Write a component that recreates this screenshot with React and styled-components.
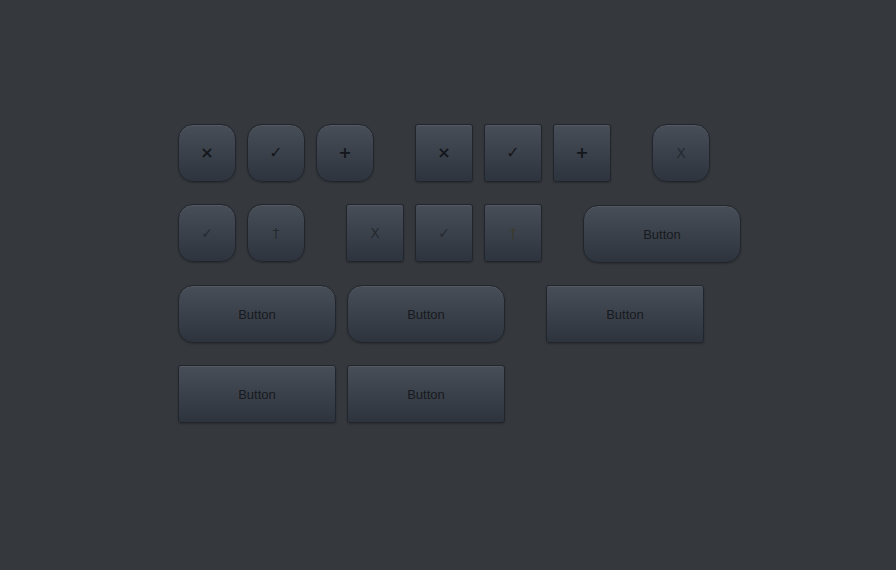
import styled, { createGlobalStyle } from "styled-components"

const GlobalStyle = createGlobalStyle`
	html, body {
		margin: 0;
		padding: 0;
		background: #35383d;
		font-family: "Liberation Sans", Arial, sans-serif;
	}
`

const Page = styled.div`
	width: 896px;
	height: 570px;
	box-sizing: border-box;
	padding: 124px 0 0 178px;
	display: flex;
	flex-direction: column;
	gap: 22px;
`

const Row = styled.div`
	display: flex;
	align-items: flex-start;
	gap: 41px;
`

const Group = styled.div`
	display: flex;
	gap: 11px;
`

const Btn = styled.button`
	box-sizing: border-box;
	width: ${(p) => (p.$wide ? "158px" : "58px")};
	height: 58px;
	margin-top: ${(p) => p.$shift || 0}px;
	padding: 0;
	display: flex;
	align-items: center;
	justify-content: center;
	border: 1px solid #22262c;
	border-radius: ${(p) => (p.$round ? "15px" : "3px")};
	background: linear-gradient(#484e57, #2e343d);
	box-shadow: inset 0 1px 0 rgba(255, 255, 255, 0.07), 0 1px 2px rgba(0, 0, 0, 0.25);
	color: #171a20;
	font-family: "Liberation Sans", Arial, sans-serif;
	font-size: 13px;
	cursor: pointer;
	outline: none;
`

const Glyph = styled.span`
	font-family: "DejaVu Sans", sans-serif;
	font-size: ${(p) => (p.$thin ? "14px" : "16px")};
	font-weight: ${(p) => (p.$thin ? 400 : 700)};
	color: ${(p) => p.$color || (p.$thin ? "#252a31" : "#14171c")};
	line-height: 1;
`

function App() {
	return (
		<>
			<GlobalStyle />
			<Page>
				<Row>
					<Group>
						<Btn $round><Glyph>×</Glyph></Btn>
						<Btn $round><Glyph>✓</Glyph></Btn>
						<Btn $round><Glyph>+</Glyph></Btn>
					</Group>
					<Group>
						<Btn><Glyph>×</Glyph></Btn>
						<Btn><Glyph>✓</Glyph></Btn>
						<Btn><Glyph>+</Glyph></Btn>
					</Group>
					<Btn $round><Glyph $thin>X</Glyph></Btn>
				</Row>
				<Row>
					<Group>
						<Btn $round><Glyph $thin>✓</Glyph></Btn>
						<Btn $round><Glyph $thin>†</Glyph></Btn>
					</Group>
					<Group>
						<Btn><Glyph $thin>X</Glyph></Btn>
						<Btn><Glyph $thin>✓</Glyph></Btn>
						<Btn><Glyph $thin $color="#3a3a2e">†</Glyph></Btn>
					</Group>
					<Btn $round $wide $shift={1}>Button</Btn>
				</Row>
				<Row>
					<Group>
						<Btn $round $wide>Button</Btn>
						<Btn $round $wide>Button</Btn>
					</Group>
					<Btn $wide>Button</Btn>
				</Row>
				<Row>
					<Group>
						<Btn $wide>Button</Btn>
						<Btn $wide>Button</Btn>
					</Group>
				</Row>
			</Page>
		</>
	)
}

export default App
